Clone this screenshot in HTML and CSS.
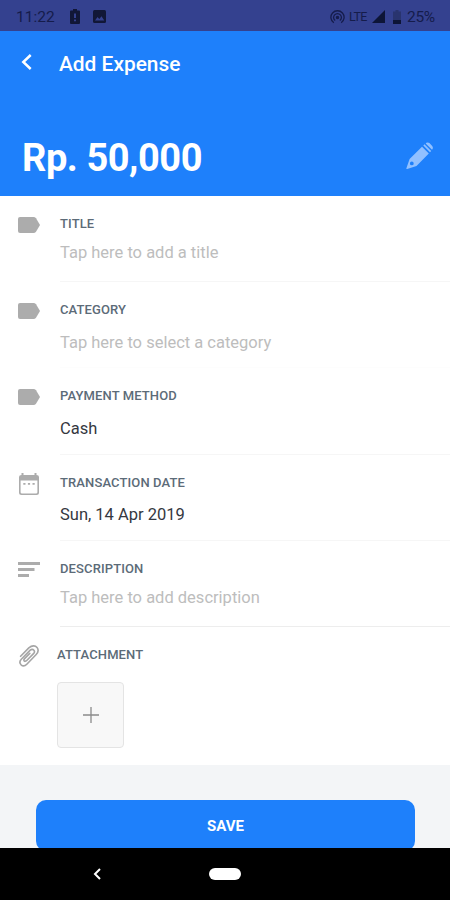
FILE: index.html
```html
<!DOCTYPE html>
<html lang="en">
<head>
<meta charset="utf-8">
<title>Add Expense</title>
<link rel="stylesheet" href="styles.css">
</head>
<body>
<svg width="0" height="0" class="defs"><defs>
  <symbol id="tag" viewBox="0 0 22 16"><path d="M2 0H15.500Q17 0 18 1.300L22 8L18 14.700Q17 16 15.500 16H2Q0 16 0 14V2Q0 0 2 0Z" fill="#acacac"/></symbol>
</defs></svg>
<div class="screen">
  <div class="status">
    <span class="time">11:22</span>
    <svg class="battery-alert" width="10" height="15" viewBox="0 0 10 15"><path d="M3 0H7V1.500H9Q10 1.500 10 2.500V14Q10 15 9 15H1Q0 15 0 14V2.500Q0 1.500 1 1.500H3Z" fill="#111737"/><path d="M4 4.500H6V9H4ZM4 10.500H6V12.300H4Z" fill="#34418f"/></svg>
    <svg class="photo" width="13" height="13" viewBox="0 0 13 13"><rect width="13" height="13" rx="1.500" fill="#111737"/><path d="M2 10.500L4.500 7L6.300 9L8.500 6.200L11.300 10.500Z" fill="#34418f"/></svg>
    <span class="spacer"></span>
    <svg class="hotspot" width="15" height="14" viewBox="0 0 15 14" fill="none" stroke="#151c4b" stroke-width="1.300"><path d="M3.800 12.800A6.600 6.600 0 1 1 11.200 12.800M5.200 10.600A3.900 3.900 0 1 1 9.800 10.600"/><circle cx="7.500" cy="7.500" r="1.100" fill="#151c4b"/></svg>
    <span class="lte">LTE</span>
    <svg class="signal" width="13" height="13" viewBox="0 0 13 13"><path d="M13 0V13H0Z" fill="#0d1537"/></svg>
    <svg class="battery" width="8" height="14" viewBox="0 0 8 14"><path d="M2.500 0H5.500V1.500H8V10H0V1.500H2.500Z" fill="#29346f"/><path d="M0 10H8V14H0Z" fill="#0d1537"/></svg>
    <span class="percent">25%</span>
  </div>
  <header class="header">
    <div class="bar">
      <svg class="back" width="11" height="16" viewBox="0 0 11 16"><path d="M9.700 1L2.300 8L9.700 15" fill="none" stroke="#fff" stroke-width="2.500"/></svg>
      <h1 class="heading">Add Expense</h1>
    </div>
    <div class="total">
      <span class="amount">Rp. 50,000</span>
      <svg class="pencil" width="27" height="28" viewBox="0 0 27 28" fill="#91c0ff"><path d="M16 4.800L22.800 11.600L10.500 24L1.200 27Q.1 27.300.4 26.200L3.600 17ZM5.800 19.500A1.900 1.900 0 1 0 5.800 23.300A1.900 1.900 0 1 0 5.800 19.500Z" fill-rule="evenodd"/><path d="M17.300 3.500L18.500 2.300L25.200 9L24 10.200ZM19.700 1.400L20.400.8Q22 0 23.400 1.100L26.200 3.900Q27.300 5.400 26.600 6.900L26 7.700Z"/></svg>
    </div>
  </header>
  <main class="form">
    <section class="row tight">
      <svg class="icon" width="22" height="16"><use href="#tag"/></svg>
      <div class="field"><div class="label">TITLE</div><div class="value hint">Tap here to add a title</div></div>
    </section>
    <section class="row faint">
      <svg class="icon" width="22" height="16"><use href="#tag"/></svg>
      <div class="field"><div class="label">CATEGORY</div><div class="value hint">Tap here to select a category</div></div>
    </section>
    <section class="row">
      <svg class="icon" width="22" height="16"><use href="#tag"/></svg>
      <div class="field"><div class="label">PAYMENT METHOD</div><div class="value">Cash</div></div>
    </section>
    <section class="row">
      <svg class="icon date" width="20" height="22" viewBox="0 0 20 22"><path d="M2.500 0H4.500V2H15.500V0H17.500V2Q20 2 20 4V19.500Q20 22 17.500 22H2.500Q0 22 0 19.500V4Q0 2 2.500 2ZM1.600 7.500V19.300Q1.600 20.400 2.700 20.400H17.300Q18.400 20.400 18.400 19.300V7.500Z" fill="#acacac" fill-rule="evenodd"/><path d="M4.300 10H6.500V11.700H4.300ZM8.900 10H11.100V11.700H8.900ZM13.500 10H15.700V11.700H13.500Z" fill="#acacac"/></svg>
      <div class="field"><div class="label">TRANSACTION DATE</div><div class="value">Sun, 14 Apr 2019</div></div>
    </section>
    <section class="row tight strong">
      <svg class="icon lines" width="22" height="15" viewBox="0 0 22 15" fill="#acacac"><path d="M0 0H22V3H0ZM0 6H16.500V9H0ZM0 12H11V15H0Z"/></svg>
      <div class="field"><div class="label">DESCRIPTION</div><div class="value hint">Tap here to add description</div></div>
    </section>
    <section class="row attachment">
      <svg class="icon clip" width="20" height="22" viewBox="0 0 20 22" fill="none" stroke="#a5a5a5" stroke-width="1.600" stroke-linecap="round"><path d="M1.600 11.300L9.800 2.900C13 .2 16.300.3 18 2.400C19.700 4.800 19.200 7.500 17.200 9.500L7.800 19.200C6 21 3.700 21.300 2.100 19.800C.5 18.200.7 16 2.300 14.300L11.200 5.200C12.500 4.100 14 4.200 14.900 5.200C15.800 6.300 15.500 7.600 14.500 8.600L7.500 15.700C6.600 16.500 5.700 16.500 5.200 15.900C4.600 15.200 4.900 14.400 5.600 13.600L10.800 8.400"/></svg>
      <div class="field"><div class="label">ATTACHMENT</div>
        <div class="add"><svg width="16" height="16" viewBox="0 0 16 16"><path d="M8 0V16M0 8H16" stroke="#8b8b8b" stroke-width="1.300"/></svg></div>
      </div>
    </section>
  </main>
  <footer class="footer"><div class="save">SAVE</div></footer>
  <nav class="nav">
    <span class="side"><svg width="8" height="12" viewBox="0 0 8 12"><path d="M7 1L2 6L7 11" fill="none" stroke="#fff" stroke-width="2"/></svg></span>
    <span class="home"></span>
    <span class="side"></span>
  </nav>
</div>
</body>
</html>
```
FILE: styles.css
```css
* { box-sizing: border-box; }
body { margin: 0; font-family: Roboto, "Liberation Sans", sans-serif; background: #fff; }
svg { display: block; flex: none; }
span { white-space: nowrap; }
.defs { position: absolute; }
.screen { width: 450px; height: 900px; display: flex; flex-direction: column; overflow: hidden; }
.status { height: 31px; flex: none; background: #34418f; color: #151c4b; display: flex; align-items: center; padding: 2px 15px 0 16px; font-size: 15.500px; }
.time { width: 39px; }
.battery-alert { margin-left: 15px; }
.photo { margin-left: 13px; }
.spacer { flex: 1; }
.lte { margin-left: 4px; width: 19px; font-size: 12.500px; letter-spacing: -.6px; }
.signal { margin-left: 4px; }
.battery { margin-left: 8px; }
.percent { margin-left: 6px; width: 28px; font-size: 15.500px; letter-spacing: -.3px; }
.header { height: 165px; flex: none; background: #1e80fb; color: #fff; }
.bar { height: 64px; display: flex; align-items: center; padding-left: 21px; }
.back { margin-top: -2px; }
.heading { margin: 1px 0 0 27px; font-size: 20.900px; font-weight: 500; line-height: 28px; }
.total { height: 101px; display: flex; align-items: center; justify-content: space-between; padding: 25px 17px 0 22px; }
.amount { font-size: 38px; font-weight: 700; line-height: 44px; letter-spacing: -.45px; }
.pencil { margin-top: -4px; }
.form { height: 569px; flex: none; background: #fff; }
.row { height: 86.200px; display: flex; padding-left: 18px; }
.icon { margin-top: 21px; }
.field { width: 390px; margin-left: 20px; padding-top: 20px; border-bottom: 1px solid #f6f6f6; }
.faint .field { border-color: #fdfdfd; }
.strong .field { border-color: #ededed; }
.label { font-size: 13px; line-height: 16px; font-weight: 500; letter-spacing: .12px; color: #5c6b78; }
.value { margin-top: 13.500px; font-size: 16.500px; line-height: 22px; color: #35383f; }
.tight .value { margin-top: 10px; }
.value.hint { color: #bdbdbd; }
.icon.date { margin: 18px 1px 0; }
.icon.lines { margin-top: 21px; }
.attachment { height: 138px; }
.icon.clip { margin: 18px 1px 0; }
.attachment .field { margin-left: 17px; border: 0; }
.add { width: 67px; height: 66px; margin-top: 19px; border: 1px solid #e4e4e4; border-radius: 4px; background: #f8f8f8; display: flex; align-items: center; justify-content: center; }
.footer { height: 83px; flex: none; background: #f3f5f7; padding: 35px 35px 0 36px; overflow: hidden; }
.save { height: 51px; border-radius: 10px; background: #1e80fb; color: #fff; display: flex; align-items: center; justify-content: center; font-size: 15px; font-weight: 700; }
.nav { height: 52px; background: #000; display: flex; align-items: center; }
.side { width: 209px; padding-left: 93px; }
.home { width: 32px; height: 12px; border-radius: 6px; background: #fff; }
```
